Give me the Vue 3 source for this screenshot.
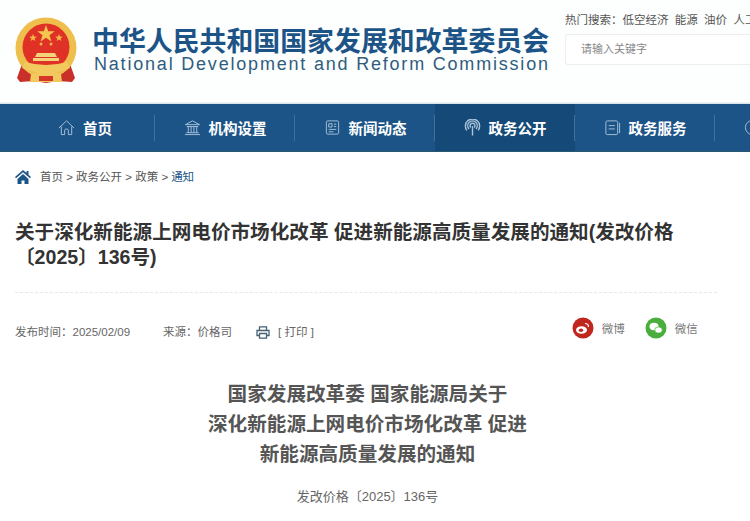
<template>
  <div class="page">
    <header class="top">
      <svg class="emblem" viewBox="1 -1 62 66" aria-hidden="true">
        <path d="M8 46 L3 60 L6 64 L20 63 L32 65 L44 63 L58 64 L61 60 L56 46 Z" fill="#c9302a" />
        <circle cx="32" cy="30" r="30.500" fill="#eebf4d" />
        <circle cx="32" cy="29" r="23.500" fill="#e03127" />
        <path d="M32 7 l2.200 6.200 6.500 .1 -5.200 4 1.900 6.300 -5.400 -3.800 -5.400 3.800 1.900 -6.300 -5.200 -4 6.500 -.1 Z" fill="#f3c64f" />
        <path d="M19 16 l1 2.600 2.800 .1 -2.200 1.700 .8 2.700 -2.400 -1.600 -2.400 1.600 .8 -2.700 -2.200 -1.700 2.800 -.1 Z" fill="#f0b848" />
        <path d="M45 16 l1 2.600 2.800 .1 -2.200 1.700 .8 2.700 -2.400 -1.600 -2.400 1.600 .8 -2.700 -2.200 -1.700 2.800 -.1 Z" fill="#f0b848" />
        <circle cx="27" cy="26" r="1.500" fill="#f0b848" />
        <circle cx="37" cy="26" r="1.500" fill="#f0b848" />
        <path d="M23 35 H41 L43 39 H21 Z M19 40 H45 V43 H19 Z" fill="#f3d27a" />
        <path d="M11 44 Q32 50 53 44 L56 50 Q32 60 8 50 Z" fill="#f2c95f" />
        <path d="M17 56 Q32 50 47 56 L48 64 H16 Z" fill="#f2c95f" />
        <path d="M25 58 H39 V63 H25 Z" fill="#d8352a" />
      </svg>
      <div class="brand">
        <div class="brand-cn">中华人民共和国国家发展和改革委员会</div>
        <div class="brand-en">National Development and Reform Commission</div>
      </div>
      <div class="search">
        <div class="hot">
          <span>热门搜索：</span>
          <span v-for="word in hotWords" :key="word" class="hot-word">{{ word }}</span>
        </div>
        <div class="search-box">请输入关键字</div>
      </div>
    </header>

    <nav class="nav">
      <a v-for="item in navItems" :key="item.label" class="nav-item" :class="{ active: item.active }">
        <svg class="nav-icon" viewBox="0 0 18 18" fill="none" stroke="currentColor" stroke-width="1" aria-hidden="true">
          <template v-if="item.icon === 'home'">
            <path d="M1 9.500 9 2l8 7.500" />
            <path d="M3.500 8v8.500h3.500v-4a2 2 0 0 1 4 0v4h3.500V8" />
          </template>
          <template v-else-if="item.icon === 'bank'">
            <path d="M1.500 6 9 2l7.500 4Z" />
            <path d="M3 8h12M4.500 8v6.500M7.500 8v6.500M10.500 8v6.500M13.500 8v6.500M2.500 14.500h13M1 16.500h16" />
          </template>
          <template v-else-if="item.icon === 'news'">
            <rect x="2.500" y="2" width="13" height="14" rx="1.500" />
            <path d="M5 5h3.500v3.500H5ZM10.500 5.500H13M10.500 8H13M5 11h8M5 13.500h5" />
          </template>
          <template v-else-if="item.icon === 'signal'">
            <g stroke-width="1.500">
              <path d="M3 12a7.500 7.500 0 1 1 12 0" />
              <path d="M5.300 10.500a5 5 0 1 1 7.400 0" />
              <path d="M7.200 9a2.600 2.600 0 1 1 3.600 0" />
              <path d="M9 7.500V17.500" />
            </g>
          </template>
          <template v-else-if="item.icon === 'book'">
            <rect x="2" y="2" width="12.500" height="14.500" rx="1.500" />
            <path d="M5 7h6.500M5 10.500h6.500M16.500 4v11" />
          </template>
          <template v-else>
            <circle cx="9" cy="9" r="7.500" />
          </template>
        </svg>
        <span class="nav-label">{{ item.label }}</span>
      </a>
    </nav>

    <main class="main">
      <div class="crumbs">
        <svg class="crumb-home" viewBox="0 0 16 14" aria-hidden="true">
          <path d="M8 0 0 7l1 1.200L8 2.200l7 6L16 7l-2.500-2.200V1h-2v2L8 0Z" fill="#1c5487" />
          <path d="M2.500 9 8 4l5.500 5v5H9.500v-3.500h-3V14h-4Z" fill="#1c5487" />
        </svg>
        <span>首页 &gt; 政务公开 &gt; 政策 &gt;</span>
        <span class="crumb-current">通知</span>
      </div>

      <h1 class="title">关于深化新能源上网电价市场化改革 促进新能源高质量发展的通知(发改价格〔2025〕136号)</h1>

      <div class="meta">
        <span>发布时间：2025/02/09</span>
        <span class="source">来源：价格司</span>
        <svg class="print-icon" viewBox="0 0 14 13" fill="none" stroke="#456274" stroke-width="1.300" aria-hidden="true">
          <path d="M3.500 4V.8h7V4" />
          <path d="M3 9.500H1V4.500h12v5h-2" />
          <path d="M3.500 7.500h7v4.700h-7Z" />
        </svg>
        <span class="print">[ 打印 ]</span>
        <div class="share">
          <svg class="share-icon" viewBox="0 0 22 22" aria-hidden="true">
            <circle cx="11" cy="11" r="10.500" fill="#c0281f" />
            <ellipse cx="9.500" cy="13" rx="5.500" ry="3.800" fill="#fff" />
            <ellipse cx="9" cy="13.300" rx="2.200" ry="1.800" fill="#c0281f" />
            <path d="M13 6.500a3.500 3.500 0 0 1 3.500 3.500" fill="none" stroke="#fff" stroke-width="1.200" />
          </svg>
          <span class="share-text">微博</span>
          <svg class="share-icon wechat" viewBox="0 0 22 22" aria-hidden="true">
            <circle cx="11" cy="11" r="10.500" fill="#4aae3e" />
            <ellipse cx="9" cy="9.500" rx="4.500" ry="3.700" fill="#fff" />
            <ellipse cx="13.500" cy="13" rx="3.800" ry="3.100" fill="#fff" stroke="#4aae3e" stroke-width=".7" />
          </svg>
          <span class="share-text">微信</span>
        </div>
      </div>

      <h2 class="doc-title">
        <span>国家发展改革委 国家能源局关于</span>
        <span>深化新能源上网电价市场化改革 促进</span>
        <span>新能源高质量发展的通知</span>
      </h2>
      <p class="doc-no">发改价格〔2025〕136号</p>
    </main>
  </div>
</template>

<script setup>
const hotWords = ['低空经济', '能源', '油价', '人工智能']

const navItems = [
  { label: '首页', icon: 'home' },
  { label: '机构设置', icon: 'bank' },
  { label: '新闻动态', icon: 'news' },
  { label: '政务公开', icon: 'signal', active: true },
  { label: '政务服务', icon: 'book' },
  { label: '数据发布', icon: 'circle' }
]
</script>

<style>
html,
body {
  margin: 0;
  background: #fff;
  overflow: hidden;
}
</style>

<style scoped>
.page {
  width: 750px;
  height: 521px;
  overflow: hidden;
  font-family: "Liberation Sans", "Noto Sans CJK SC", sans-serif;
  color: #555;
}

.top {
  display: flex;
  align-items: flex-start;
  height: 103px;
  box-sizing: border-box;
  padding: 17px 0 0 15px;
  background: #fdfefe;
  border-bottom: 1px solid #f0f3f3;
}

.emblem {
  width: 62px;
  height: 66px;
  flex: none;
}

.brand {
  margin-left: 15px;
  width: 458px;
  flex: none;
}

.brand-cn {
  font-size: 26.900px;
  line-height: 30px;
  margin-top: 10px;
  font-weight: 700;
  color: #1c5487;
  white-space: nowrap;
}

.brand-en {
  font-size: 18px;
  line-height: 14px;
  letter-spacing: 1.800px;
  margin-left: 2px;
  color: #2f5d7e;
  white-space: nowrap;
}

.search {
  margin-left: 15px;
  margin-top: -5px;
  flex: none;
  width: 200px;
}

.hot {
  display: flex;
  font-size: 11.500px;
  line-height: 16px;
  color: #555;
  white-space: nowrap;
}

.hot-word {
  margin-right: 6.300px;
}

.search-box {
  margin-top: 6px;
  height: 31px;
  box-sizing: border-box;
  border: 1px solid #eceeef;
  border-right: none;
  border-radius: 3px 0 0 3px;
  padding-left: 15px;
  font-size: 11px;
  line-height: 28px;
  color: #888;
  background: #fff;
}

.nav {
  display: flex;
  height: 49px;
  padding-left: 15px;
  background: #1c5487;
  border-top: 1px solid #d6e6ea;
  border-bottom: 1px solid #27586f;
  box-sizing: border-box;
}

.nav-item {
  flex: 0 0 140px;
  display: flex;
  align-items: center;
  justify-content: center;
  gap: 8px;
  height: 47px;
  color: #fff;
  position: relative;
}

.nav-item::after {
  content: "";
  position: absolute;
  right: 0;
  top: 11px;
  height: 26px;
  width: 1px;
  background: #3f719c;
}

.nav-item.active {
  background: #154a78;
}

.nav-icon {
  width: 17px;
  height: 17px;
  flex: none;
  color: #a9c4da;
}

.nav-label {
  font-size: 14.500px;
  font-weight: 700;
  white-space: nowrap;
}

.main {
  width: 705px;
  margin-left: 15px;
}

.crumbs {
  display: flex;
  align-items: center;
  height: 16px;
  margin-top: 17px;
  font-size: 11.500px;
  line-height: 16px;
  color: #555;
}

.crumb-home {
  width: 16px;
  height: 14px;
  margin-right: 9px;
  flex: none;
}

.crumb-current {
  margin-left: 3px;
  color: #1c5487;
}

.title {
  margin: 35px 3px 0 0;
  padding-bottom: 22px;
  font-size: 19.600px;
  font-weight: 700;
  line-height: 25px;
  color: #333;
  border-bottom: 1px dashed #e8e8e8;
}

.meta {
  display: flex;
  align-items: center;
  height: 20px;
  margin-top: 28px;
  font-size: 11.500px;
  color: #666;
  white-space: nowrap;
}

.source {
  margin-left: 33px;
}

.print-icon {
  width: 14px;
  height: 13px;
  margin-left: 24px;
  margin-top: 2px;
}

.print {
  margin-left: 8px;
}

.share {
  display: flex;
  align-items: center;
  margin-left: 258px;
  margin-top: -6px;
}

.share-icon {
  width: 22px;
  height: 22px;
  flex: none;
}

.share-text {
  margin-left: 8px;
  color: #777;
}

.wechat {
  margin-left: 20px;
}

.doc-title {
  display: flex;
  flex-direction: column;
  align-items: center;
  margin: 38px 0 0;
  font-size: 19.600px;
  font-weight: 700;
  line-height: 30px;
  color: #555;
}

.doc-no {
  margin: 18px 0 0;
  text-align: center;
  font-size: 13px;
  line-height: 20px;
  color: #666;
}
</style>
